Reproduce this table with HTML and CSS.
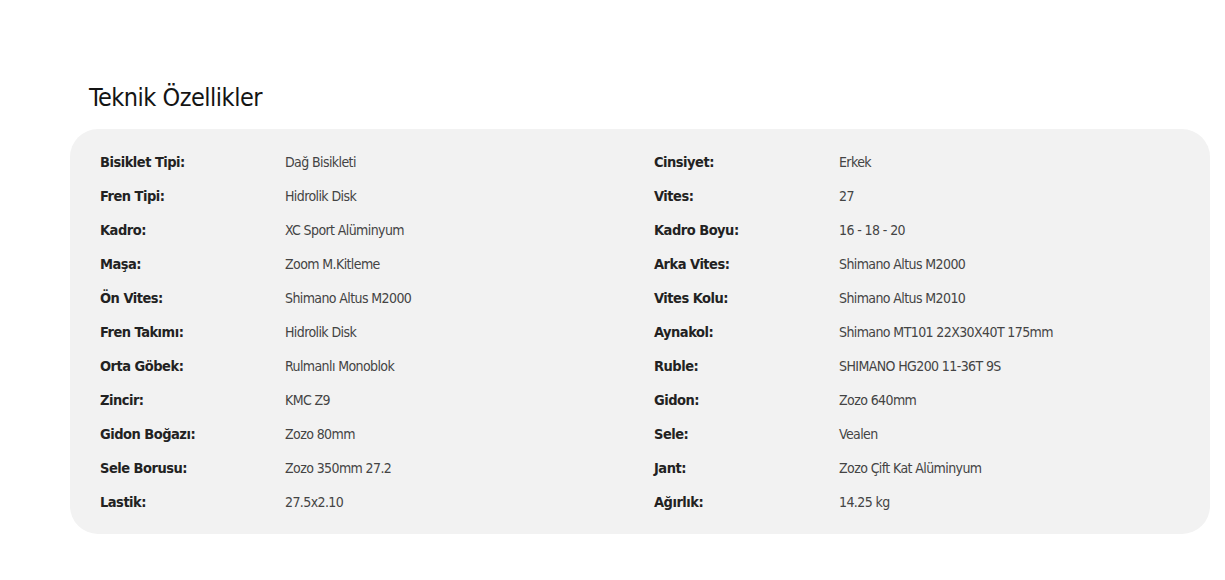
FILE: index.html
```html
<!DOCTYPE html>
<html lang="tr">
<head>
<meta charset="utf-8">
<title>Teknik Özellikler</title>
<link rel="stylesheet" href="styles.css">
</head>
<body>
<section class="specs">
  <h2 class="specs-title">Teknik Özellikler</h2>
  <div class="specs-box">
    <div class="specs-col">
      <div class="row"><span class="label">Bisiklet Tipi:</span><span class="value">Dağ Bisikleti</span></div>
      <div class="row"><span class="label">Fren Tipi:</span><span class="value">Hidrolik Disk</span></div>
      <div class="row"><span class="label">Kadro:</span><span class="value">XC Sport Alüminyum</span></div>
      <div class="row"><span class="label">Maşa:</span><span class="value">Zoom M.Kitleme</span></div>
      <div class="row"><span class="label">Ön Vites:</span><span class="value">Shimano Altus M2000</span></div>
      <div class="row"><span class="label">Fren Takımı:</span><span class="value">Hidrolik Disk</span></div>
      <div class="row"><span class="label">Orta Göbek:</span><span class="value">Rulmanlı Monoblok</span></div>
      <div class="row"><span class="label">Zincir:</span><span class="value">KMC Z9</span></div>
      <div class="row"><span class="label">Gidon Boğazı:</span><span class="value">Zozo 80mm</span></div>
      <div class="row"><span class="label">Sele Borusu:</span><span class="value">Zozo 350mm 27.2</span></div>
      <div class="row"><span class="label">Lastik:</span><span class="value">27.5x2.10</span></div>
    </div>
    <div class="specs-col">
      <div class="row"><span class="label">Cinsiyet:</span><span class="value">Erkek</span></div>
      <div class="row"><span class="label">Vites:</span><span class="value">27</span></div>
      <div class="row"><span class="label">Kadro Boyu:</span><span class="value">16 - 18 - 20</span></div>
      <div class="row"><span class="label">Arka Vites:</span><span class="value">Shimano Altus M2000</span></div>
      <div class="row"><span class="label">Vites Kolu:</span><span class="value">Shimano Altus M2010</span></div>
      <div class="row"><span class="label">Aynakol:</span><span class="value">Shimano MT101 22X30X40T 175mm</span></div>
      <div class="row"><span class="label">Ruble:</span><span class="value">SHIMANO HG200 11-36T 9S</span></div>
      <div class="row"><span class="label">Gidon:</span><span class="value">Zozo 640mm</span></div>
      <div class="row"><span class="label">Sele:</span><span class="value">Vealen</span></div>
      <div class="row"><span class="label">Jant:</span><span class="value">Zozo Çift Kat Alüminyum</span></div>
      <div class="row"><span class="label">Ağırlık:</span><span class="value">14.25 kg</span></div>
    </div>
  </div>
</section>
</body>
</html>
```
FILE: styles.css
```css
* { box-sizing: border-box; }
html, body { margin: 0; padding: 0; background: #ffffff; }
body {
  font-family: "DejaVu Sans Condensed", "Liberation Sans", sans-serif;
  color: #222;
}
.specs {
  padding: 80px 15px 0 70px;
}
.specs-title {
  margin: 0 0 13px 19px;
  font-size: 25px;
  font-weight: 400;
  letter-spacing: -0.5px;
  line-height: 36px;
  color: #141414;
}
.specs-box {
  width: 1140px;
  background: #f2f2f2;
  border-radius: 28px;
  padding: 16px 0 15px 30px;
  display: grid;
  grid-template-columns: 554px 1fr;
}
.row {
  display: grid;
  grid-template-columns: 185px 1fr;
  height: 34px;
  align-items: center;
}
.label {
  font-size: 14.5px;
  font-weight: 700;
  letter-spacing: -0.5px;
  color: #222;
}
.value {
  font-size: 14px;
  font-weight: 400;
  letter-spacing: -0.6px;
  color: #444;
}
```
